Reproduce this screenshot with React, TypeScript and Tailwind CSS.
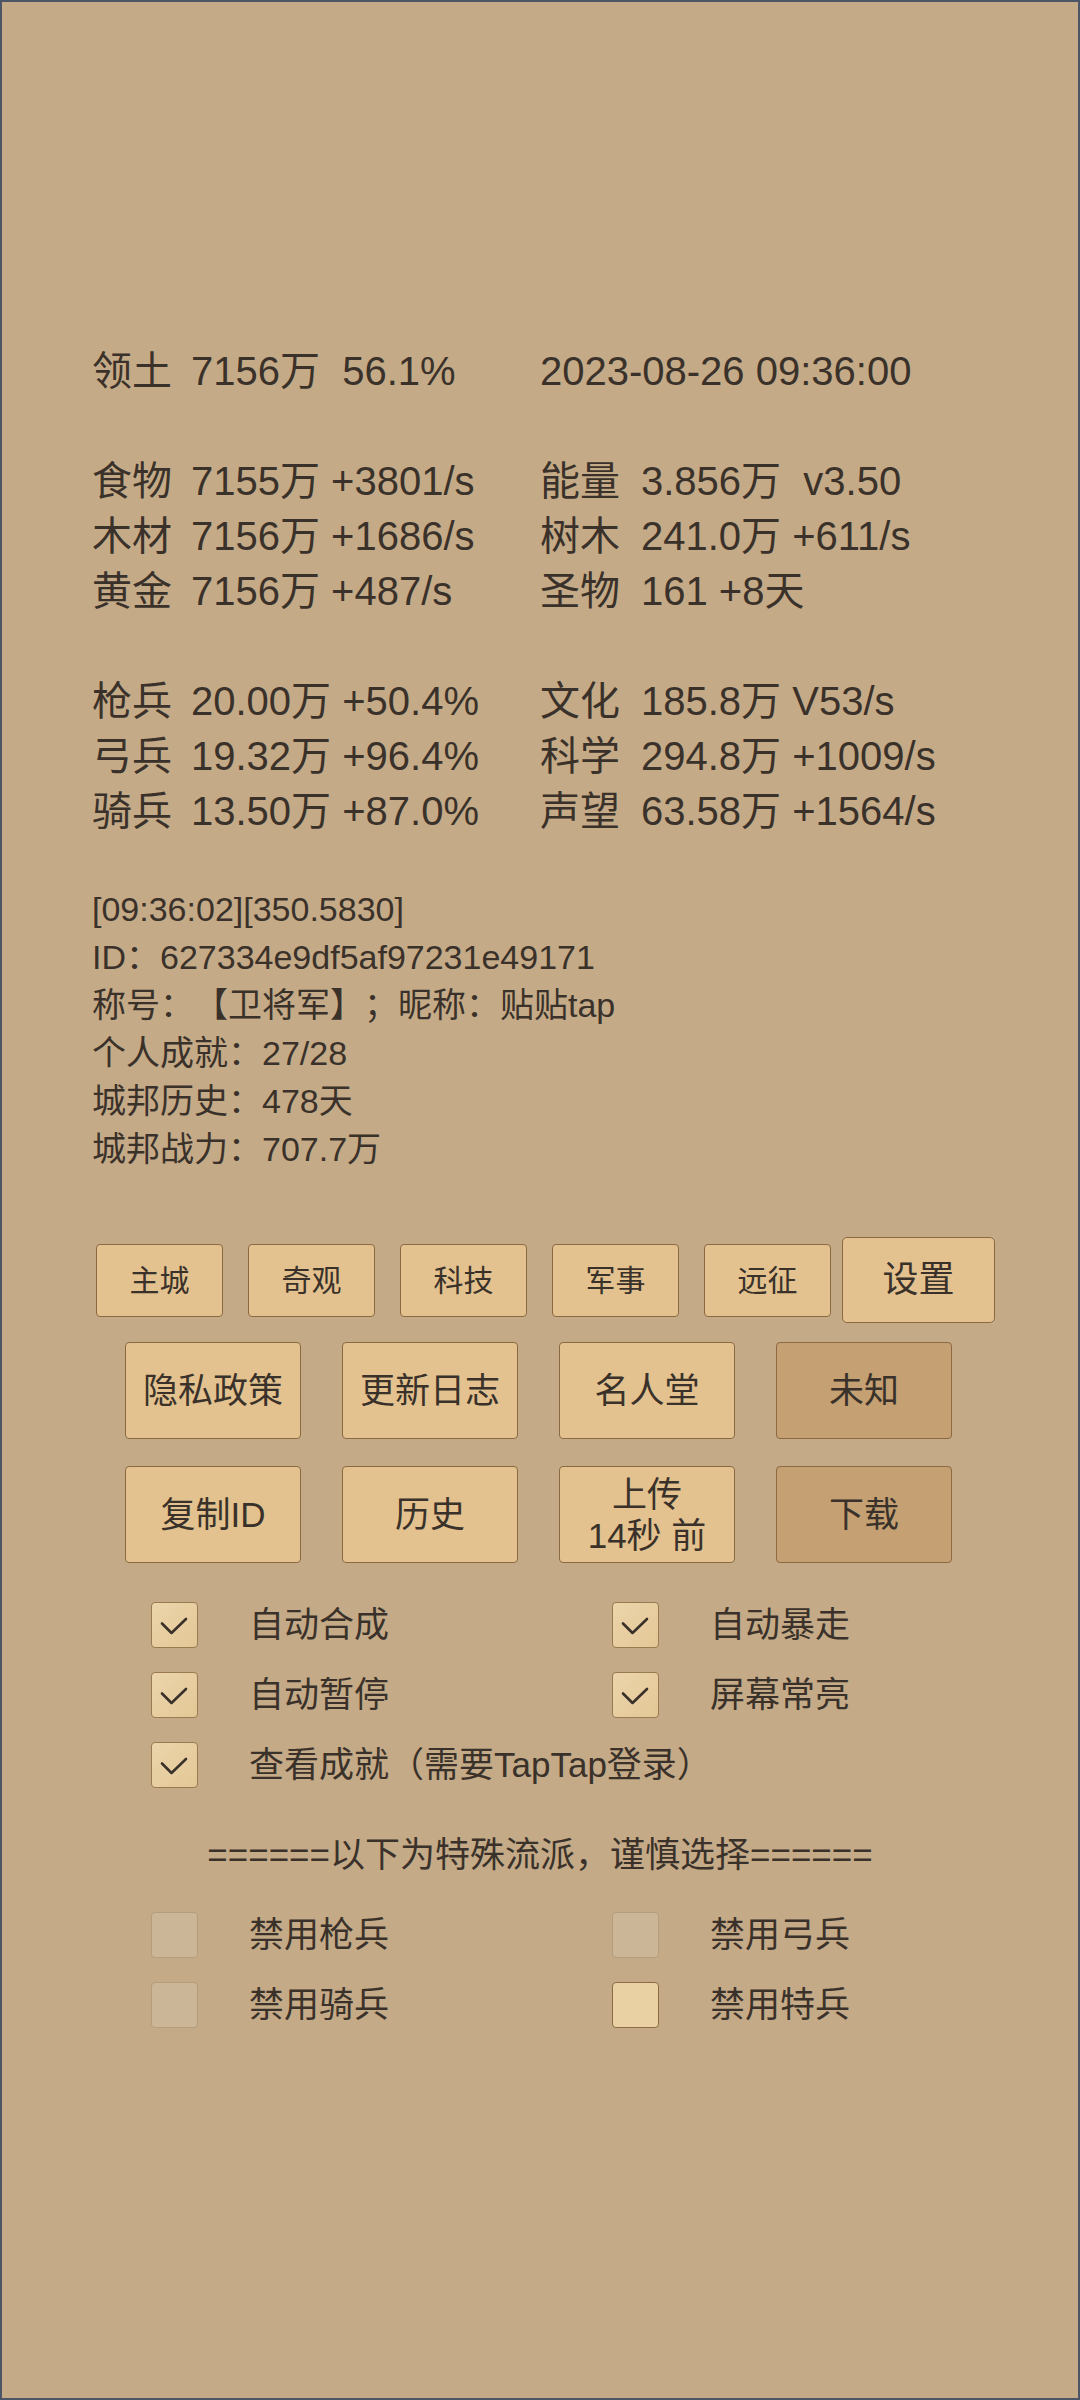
import React from 'react';

// 城邦游戏主界面 — 资源面板 + 操作按钮 + 设置勾选项

type StatRow = readonly [string, string, string, string] | null;

const STATS: readonly StatRow[] = [
  ['领土', '7156万  56.1%', '', '2023-08-26 09:36:00'],
  null,
  ['食物', '7155万 +3801/s', '能量', '3.856万  v3.50'],
  ['木材', '7156万 +1686/s', '树木', '241.0万 +611/s'],
  ['黄金', '7156万 +487/s', '圣物', '161 +8天'],
  null,
  ['枪兵', '20.00万 +50.4%', '文化', '185.8万 V53/s'],
  ['弓兵', '19.32万 +96.4%', '科学', '294.8万 +1009/s'],
  ['骑兵', '13.50万 +87.0%', '声望', '63.58万 +1564/s'],
];

const INFO = [
  '[09:36:02][350.5830]',
  'ID：627334e9df5af97231e49171',
  '称号：【卫将军】；昵称：贴贴tap',
  '个人成就：27/28',
  '城邦历史：478天',
  '城邦战力：707.7万',
];

const TABS = ['主城', '奇观', '科技', '军事', '远征'];

function Check() {
  return (
    <svg width="44" height="43" viewBox="0 0 44 43" className="block">
      <polyline
        points="10,20.5 19.5,30 34,16"
        fill="none"
        stroke="#3a322a"
        strokeWidth="2.6"
        strokeLinecap="round"
        strokeLinejoin="round"
      />
    </svg>
  );
}

function Box({ checked, light }: { readonly checked?: boolean; readonly light?: boolean }) {
  if (checked) {
    return (
      <span className="flex w-[47px] h-[46px] shrink-0 rounded-[4px] border-[1.5px] border-[#9a7a50] bg-gradient-to-br from-[#ecd5ab] to-[#e3c796]">
        <Check />
      </span>
    );
  }
  if (light) {
    return (
      <span className="block w-[47px] h-[46px] shrink-0 rounded-[4px] border-[1.5px] border-[#8d6b45] bg-[#e9d1a3]" />
    );
  }
  return (
    <span className="block w-[47px] h-[46px] shrink-0 rounded-[4px] border-[1.5px] border-[#b59d7b] bg-[#cbb698]" />
  );
}

function Option({
  label,
  checked,
  light,
}: {
  readonly label: string;
  readonly checked?: boolean;
  readonly light?: boolean;
}) {
  return (
    <span className="flex items-center">
      <Box checked={checked} light={light} />
      <span className="ml-[51px] whitespace-nowrap">{label}</span>
    </span>
  );
}

function OptionRow({ left, right }: { readonly left: React.ReactNode; readonly right?: React.ReactNode }) {
  return (
    <div className="flex items-center h-[70px]">
      <div className="w-[610px] pl-[149px] flex items-center">{left}</div>
      <div className="flex items-center">{right}</div>
    </div>
  );
}

function BigButton({ children, dark }: { readonly children: React.ReactNode; readonly dark?: boolean }) {
  return (
    <button
      type="button"
      className={
        dark
          ? 'w-[176px] h-[97px] rounded-[4px] border-[1.5px] border-[#8a6943] bg-[#c4a072] text-[35px] leading-[41px] flex flex-col items-center justify-center'
          : 'w-[176px] h-[97px] rounded-[4px] border-[1.5px] border-[#8a6943] bg-[#e3c28f] text-[35px] leading-[41px] flex flex-col items-center justify-center'
      }
    >
      {children}
    </button>
  );
}

export default function App() {
  return (
    <div className="w-[1080px] h-[2400px] border-2 border-[#4d5666] bg-[#c5aa87] text-[#3a322a] font-['Liberation_Sans','Noto_Sans_CJK_SC',sans-serif] [text-spacing-trim:space-all] pt-[342px] overflow-hidden">
      {/* 资源 */}
      <div className="text-[40px] leading-[55px]">
        {STATS.map((row, i) =>
          row ? (
            <div key={i} className="flex h-[55px]">
              <div className="w-[538px] pl-[90px] flex">
                <span className="w-[99px] shrink-0">{row[0]}</span>
                <span className="whitespace-pre">{row[1]}</span>
              </div>
              <div className="flex">
                {row[2] && <span className="w-[101px] shrink-0">{row[2]}</span>}
                <span className="whitespace-pre">{row[3]}</span>
              </div>
            </div>
          ) : (
            <div key={i} className="h-[55px]" />
          ),
        )}
      </div>

      {/* 玩家信息 */}
      <div className="mt-[46px] pl-[90px] text-[34px] leading-[48px]">
        {INFO.map((line) => (
          <div key={line} className="whitespace-pre">
            {line}
          </div>
        ))}
      </div>

      {/* 页签 */}
      <div className="mt-[64px] h-[86px] pl-[94px] flex items-center">
        <div className="flex gap-[25px]">
          {TABS.map((t) => (
            <button
              key={t}
              type="button"
              className="w-[127px] h-[73px] rounded-[4px] border-[1.5px] border-[#8a6943] bg-[#e3c28f] text-[30px]"
            >
              {t}
            </button>
          ))}
        </div>
        <button
          type="button"
          className="ml-[11px] w-[153px] h-[86px] rounded-[5px] border-[1.5px] border-[#8a6943] bg-[#e3c28f] text-[36px]"
        >
          设置
        </button>
      </div>

      <div className="mt-[19px] pl-[123px] flex gap-[41px]">
        <BigButton>隐私政策</BigButton>
        <BigButton>更新日志</BigButton>
        <BigButton>名人堂</BigButton>
        <BigButton dark>未知</BigButton>
      </div>

      <div className="mt-[27px] pl-[123px] flex gap-[41px]">
        <BigButton>复制ID</BigButton>
        <BigButton>历史</BigButton>
        <BigButton>
          <span>上传</span>
          <span className="whitespace-pre">14秒 前</span>
        </BigButton>
        <BigButton dark>下载</BigButton>
      </div>

      {/* 设置项 */}
      <div className="mt-[27px] text-[35px]">
        <OptionRow left={<Option label="自动合成" checked />} right={<Option label="自动暴走" checked />} />
        <OptionRow left={<Option label="自动暂停" checked />} right={<Option label="屏幕常亮" checked />} />
        <OptionRow left={<Option label="查看成就（需要TapTap登录）" checked />} />

        <div className="h-[100px] pt-[10px] flex items-center justify-center whitespace-nowrap">
          ======以下为特殊流派，谨慎选择======
        </div>

        <OptionRow left={<Option label="禁用枪兵" />} right={<Option label="禁用弓兵" />} />
        <OptionRow left={<Option label="禁用骑兵" />} right={<Option label="禁用特兵" light />} />
      </div>
    </div>
  );
}
